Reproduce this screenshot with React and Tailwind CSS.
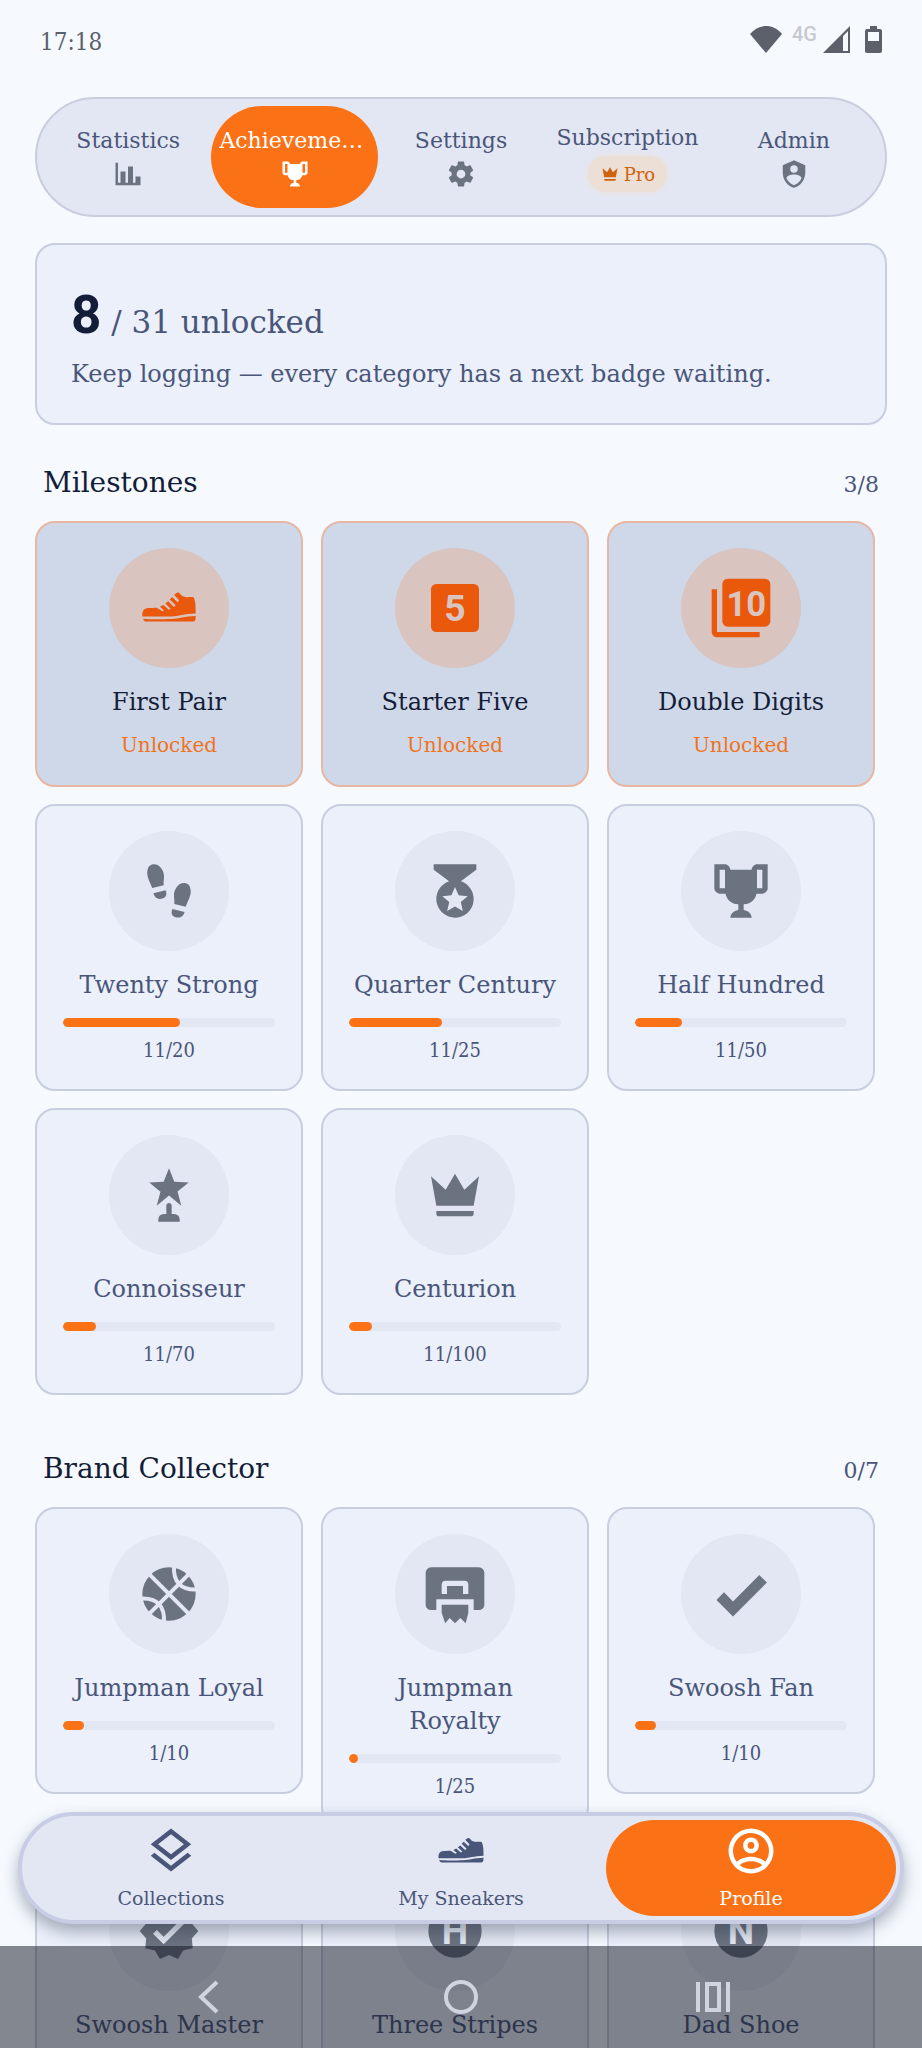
import clsx from 'clsx';

const paths = {
  chart: 'M22,21H2V3H4V19H6V10H10V19H12V6H16V19H18V14H22V21Z',
  trophy:
    'M20.2,2H19.5H18C17.1,2 16,3 16,4H8C8,3 6.9,2 6,2H4.5H3.8H2V11C2,12 3,13 4,13H6.2C6.6,15 7.9,16.7 11,17V19.08C8,19.54 8,22 8,22H16C16,22 16,19.54 13,19.08V17C16.1,16.7 17.4,15 17.8,13H20C21,13 22,12 22,11V2H20.2M4,11V4H6V6V11C5.1,11 4.3,11 4,11M20,11C19.7,11 18.9,11 18,11V6V4H20V11Z',
  cog: 'M12,15.5A3.5,3.5 0 0,1 8.5,12A3.5,3.5 0 0,1 12,8.5A3.5,3.5 0 0,1 15.5,12A3.5,3.5 0 0,1 12,15.5M19.43,12.97C19.47,12.65 19.5,12.33 19.5,12C19.5,11.67 19.47,11.34 19.43,11L21.54,9.37C21.73,9.22 21.78,8.95 21.66,8.73L19.66,5.27C19.54,5.05 19.27,4.96 19.05,5.05L16.56,6.05C16.04,5.66 15.5,5.32 14.87,5.07L14.5,2.42C14.46,2.18 14.25,2 14,2H10C9.75,2 9.54,2.18 9.5,2.42L9.13,5.07C8.5,5.32 7.96,5.66 7.44,6.05L4.95,5.05C4.73,4.96 4.46,5.05 4.34,5.27L2.34,8.73C2.21,8.95 2.27,9.22 2.46,9.37L4.57,11C4.53,11.34 4.5,11.67 4.5,12C4.5,12.33 4.53,12.65 4.57,12.97L2.46,14.63C2.27,14.78 2.21,15.05 2.34,15.27L4.34,18.73C4.46,18.95 4.73,19.03 4.95,18.95L7.44,17.94C7.96,18.34 8.5,18.68 9.13,18.93L9.5,21.58C9.54,21.82 9.75,22 10,22H14C14.25,22 14.46,21.82 14.5,21.58L14.87,18.93C15.5,18.67 16.04,18.34 16.56,17.94L19.05,18.95C19.27,19.03 19.54,18.95 19.66,18.73L21.66,15.27C21.78,15.05 21.73,14.78 21.54,14.63L19.43,12.97Z',
  shield:
    'M12,1L3,5V11C3,16.55 6.84,21.74 12,23C17.16,21.74 21,16.55 21,11V5L12,1M12,5A3,3 0 0,1 15,8A3,3 0 0,1 12,11A3,3 0 0,1 9,8A3,3 0 0,1 12,5M17.13,17C15.92,18.85 14.11,20.24 12,20.92C9.89,20.24 8.08,18.85 6.87,17C6.53,16.5 6.24,16 6,15.47C6,13.82 8.71,12.47 12,12.47C15.29,12.47 18,13.79 18,15.47C17.76,16 17.47,16.5 17.13,17Z',
  crown: 'M5 16L3 5L8.5 10L12 4L15.5 10L21 5L19 16H5M19 19C19 19.6 18.6 20 18 20H6C5.4 20 5 19.6 5 19V18H19V19Z',
  medal:
    'M20,2H4V4L9.81,8.36C6.14,9.57 4.14,13.53 5.35,17.2C6.56,20.87 10.5,22.87 14.19,21.66C17.86,20.45 19.86,16.5 18.65,12.82C17.95,10.71 16.3,9.05 14.19,8.36L20,4V2M14.94,19.5L12,17.78L9.06,19.5L9.84,16.17L7.25,13.93L10.66,13.64L12,10.5L13.34,13.64L16.75,13.93L14.16,16.17L14.94,19.5Z',
  award:
    'M15.2,10.7L16.6,16L12,12.2L7.4,16L8.8,10.8L4.6,7.3L10,7L12,2L14,7L19.4,7.3L15.2,10.7M14,19.1H13V16C13,14.7 11,14.7 11,16V19.1H10A2,2 0 0,0 8,21.1V22H16V21.1A2,2 0 0,0 14,19.1Z',
  check: 'M9,20.42L2.79,14.21L5.62,11.38L9,14.77L18.88,4.88L21.71,7.71L9,20.42Z',
  decagram:
    'M23,12L20.56,9.22L20.9,5.54L17.29,4.72L15.4,1.54L12,3L8.6,1.54L6.71,4.72L3.1,5.53L3.44,9.21L1,12L3.44,14.78L3.1,18.47L6.71,19.29L8.6,22.47L12,21L15.4,22.46L17.29,19.28L20.9,18.46L20.56,14.78L23,12M10,17L6,13L7.41,11.59L10,14.17L16.59,7.58L18,9L10,17Z',
  layers:
    'M12,18.54L19.37,12.8L21,14.07L12,21.07L3,14.07L4.62,12.81L12,18.54M12,16L3,9L12,2L21,9L12,16M12,4.53L6.26,9L12,13.47L17.74,9L12,4.53Z',
  account:
    'M12,2A10,10 0 0,0 2,12A10,10 0 0,0 12,22A10,10 0 0,0 22,12A10,10 0 0,0 12,2M7.07,18.28C7.5,17.38 10.12,16.5 12,16.5C13.88,16.5 16.5,17.38 16.93,18.28C15.57,19.36 13.86,20 12,20C10.14,20 8.43,19.36 7.07,18.28M18.36,16.83C16.93,15.09 13.46,14.5 12,14.5C10.54,14.5 7.07,15.09 5.64,16.83C4.62,15.5 4,13.82 4,12C4,7.59 7.59,4 12,4C16.41,4 20,7.59 20,12C20,13.82 19.38,15.5 18.36,16.83M12,6C10.06,6 8.5,7.56 8.5,9.5C8.5,11.44 10.06,13 12,13C13.94,13 15.5,11.44 15.5,9.5C15.5,7.56 13.94,6 12,6M12,11A1.5,1.5 0 0,1 10.5,9.5A1.5,1.5 0 0,1 12,8A1.5,1.5 0 0,1 13.5,9.5A1.5,1.5 0 0,1 12,11Z',
  hoop: 'M3,2H21A2,2 0 0,1 23,4V16A2,2 0 0,1 21,18H19V14H5V18H3A2,2 0 0,1 1,16V4A2,2 0 0,1 3,2M7,12H9V9H15V12H17V8.5A1.5,1.5 0 0,0 15.5,7H8.5A1.5,1.5 0 0,0 7,8.5V12M7,16H17V19L16,23L14,21L12,23L10,21L8.3,23L7,19V16Z',
  sneaker:
    'M2,14.9C1.9,13.2 2.6,12.1 4.2,12C5.8,12 6.4,11.9 7.4,11.9L9.5,13.2L10.2,12.9L8.6,11.5L9.9,10.9L11.9,12.7L12.6,12.3L10.6,10.3L11.7,9.5L13.8,11.6L14.5,11L12.3,8.8L13.2,7.9L15.2,9.8L15.8,9.1L13.9,7L15.1,6.2C16.2,6.1 16.1,7.2 17.4,7.7C18.6,8.2 19.8,7.7 21.2,8C22,9.4 22,11.6 22,14.1C17.6,14.2 15.8,15.2 12.8,15.2H2M2.3,16C5,16.3 9.8,16.2 12.8,16.1C16,16 17.6,15.1 22,15V15.8C21.9,16.6 21.6,17.1 21,17.1H3.6C2.9,17.1 2.4,16.6 2.3,16Z',
};

function Icon({ name, className }) {
  return (
    <svg viewBox="0 0 24 24" className={className} fill="currentColor" fillRule="evenodd" aria-hidden="true">
      <path d={paths[name]} />
    </svg>
  );
}

function FootprintsIcon({ className }) {
  const foot =
    'M10.74,11.72C11.21,12.95 11.16,14.23 9.75,14.74C6.85,15.81 6.2,13 6.16,12.86L10.74,11.72M5.71,10.91L10.03,9.84C9.84,8.79 10.13,7.74 10.13,6.5C10.13,4.82 8.8,1.53 5.68,2.06C4.26,2.3 3.84,4 3.85,5.4C3.85,7.2 5.57,10.07 5.71,10.91Z';
  return (
    <svg viewBox="0 0 24 24" className={className} fill="currentColor" aria-hidden="true">
      <path d={foot} />
      <path d={foot} transform="matrix(-1 0 0 1 24 7)" />
    </svg>
  );
}

function BasketballIcon({ className }) {
  return (
    <svg viewBox="0 0 24 24" className={className} aria-hidden="true">
      <circle cx="12" cy="12" r="10" fill="currentColor" />
      <path
        d="M4 4L20 20M20 4L4 20M13.9 1C13.4 7.6 16.4 10.8 23 10.3M1 13.7C7.6 13.2 10.6 16.4 10.1 23"
        fill="none"
        stroke="#e3e7f3"
        strokeWidth="1.5"
      />
    </svg>
  );
}

function FiveIcon({ className }) {
  return (
    <svg viewBox="0 0 24 24" className={className} aria-hidden="true">
      <rect x="3" y="3" width="18" height="18" rx="2" fill="currentColor" />
      <text x="12" y="17" textAnchor="middle" fontSize="14" fill="#d9c4c0" className="font-['Roboto',sans-serif] font-bold">5</text>
    </svg>
  );
}

function TenIcon({ className }) {
  return (
    <svg viewBox="0 0 24 24" className={className} aria-hidden="true">
      <rect x="5" y="1" width="18" height="18" rx="2" fill="currentColor" />
      <path d="M2 5V21a1 1 0 0 0 1 1H19" fill="none" stroke="currentColor" strokeWidth="2" />
      <text x="14" y="15" textAnchor="middle" fontSize="13" fill="#d9c4c0" className="font-['Roboto',sans-serif] font-bold">10</text>
    </svg>
  );
}

function LetterIcon({ letter, className }) {
  return (
    <svg viewBox="0 0 24 24" className={className} aria-hidden="true">
      <circle cx="12" cy="12" r="10" fill="currentColor" />
      <text x="12" y="17" textAnchor="middle" fontSize="14" fill="#e3e7f3" className="font-['Roboto',sans-serif] font-bold">{letter}</text>
    </svg>
  );
}

function BadgeIcon({ icon }) {
  const className = 'size-16';
  if (icon === 'five') return <FiveIcon className={className} />;
  if (icon === 'ten') return <TenIcon className={className} />;
  if (icon === 'footprints') return <FootprintsIcon className={className} />;
  if (icon === 'basketball') return <BasketballIcon className={className} />;
  if (icon === 'H' || icon === 'N') return <LetterIcon letter={icon} className={className} />;
  return <Icon name={icon} className={className} />;
}

const tabs = [
  { label: 'Statistics', icon: 'chart' },
  { label: 'Achievements', icon: 'trophy', active: true },
  { label: 'Settings', icon: 'cog' },
  { label: 'Subscription', pro: true },
  { label: 'Admin', icon: 'shield' },
];

const sections = [
  {
    title: 'Milestones',
    count: '3/8',
    badges: [
      { name: 'First Pair', icon: 'sneaker', unlocked: true },
      { name: 'Starter Five', icon: 'five', unlocked: true },
      { name: 'Double Digits', icon: 'ten', unlocked: true },
      { name: 'Twenty Strong', icon: 'footprints', value: 11, goal: 20 },
      { name: 'Quarter Century', icon: 'medal', value: 11, goal: 25 },
      { name: 'Half Hundred', icon: 'trophy', value: 11, goal: 50 },
      { name: 'Connoisseur', icon: 'award', value: 11, goal: 70 },
      { name: 'Centurion', icon: 'crown', value: 11, goal: 100 },
    ],
  },
  {
    title: 'Brand Collector',
    count: '0/7',
    badges: [
      { name: 'Jumpman Loyal', icon: 'basketball', value: 1, goal: 10 },
      { name: 'Jumpman Royalty', icon: 'hoop', value: 1, goal: 25 },
      { name: 'Swoosh Fan', icon: 'check', value: 1, goal: 10 },
      { name: 'Swoosh Master', icon: 'decagram', value: 1, goal: 25 },
      { name: 'Three Stripes', icon: 'H', value: 1, goal: 10 },
      { name: 'Dad Shoe', icon: 'N', value: 1, goal: 10 },
    ],
  },
];

const navItems = [
  { label: 'Collections', icon: 'layers' },
  { label: 'My Sneakers', icon: 'sneaker' },
  { label: 'Profile', icon: 'account', active: true },
];

function StatusBar() {
  return (
    <div className="flex h-[97px] shrink-0 items-start justify-between px-10 pt-6 text-[#5b606b]">
      <span className="font-['DejaVu_Serif_Condensed','DejaVu_Serif',serif] text-[24px] leading-9">17:18</span>
      <div className="flex items-start pt-0.5">
        <svg viewBox="0 0 32 27" className="h-[27px] w-8" fill="currentColor" aria-hidden="true">
          <path d="M0 8C9-2.600 23-2.600 32 8L16 27Z" />
        </svg>
        <span className="ml-2.5 font-['Roboto',sans-serif] text-[20px] font-medium leading-4 text-[#c6c9d0]">4G</span>
        <svg viewBox="0 0 27 27" className="ml-1.5 size-[27px]" fill="currentColor" fillRule="evenodd" aria-hidden="true">
          <path d="M27 0V27H0ZM20 10V25H25V5Z" />
        </svg>
        <svg viewBox="0 0 17 27" className="ml-[15px] h-[27px] w-[17px]" fill="currentColor" fillRule="evenodd" aria-hidden="true">
          <path d="M5 0H12V3H15a2 2 0 0 1 2 2V25a2 2 0 0 1-2 2H2a2 2 0 0 1-2-2V5a2 2 0 0 1 2-2H5ZM3 6V15H14V6Z" />
        </svg>
      </div>
    </div>
  );
}

function TabBar() {
  return (
    <nav className="flex rounded-full border-2 border-[#c9cddd] bg-[#e3e7f3] px-2 py-[7px]">
      {tabs.map((tab) => (
        <button
          key={tab.label}
          type="button"
          className={clsx(
            'flex h-[102px] min-w-0 flex-1 flex-col items-center justify-center rounded-full px-2',
            tab.active ? 'bg-[#fb7116] text-white' : 'text-[#4a5679]'
          )}
        >
          <span className="w-full truncate text-center text-[22px] leading-8">{tab.label}</span>
          {tab.pro ? (
            <span className="mt-0.5 flex h-9 items-center gap-1 rounded-full bg-[#ecdfd6] px-3 text-[18px] text-[#cf6310] shadow-[0_0_6px_#ecdfd6]">
              <Icon name="crown" className="size-5" />
              Pro
            </span>
          ) : (
            <Icon name={tab.icon} className={clsx('mt-0.5 size-[30px]', !tab.active && 'text-[#6b7280]')} />
          )}
        </button>
      ))}
    </nav>
  );
}

function BadgeCard({ badge }) {
  return (
    <article
      className={clsx(
        'flex flex-col items-center rounded-[20px] border-2 px-[26px] py-[25px]',
        badge.unlocked ? 'border-[#e8b7a3] bg-[#cfd8e8]' : 'border-[#c9cde0] bg-[#ebf0fb]'
      )}
    >
      <div
        className={clsx(
          'flex size-[120px] items-center justify-center rounded-full',
          badge.unlocked ? 'bg-[#d9c4c0] text-[#ea580c]' : 'bg-[#e3e7f3] text-[#6b7280]'
        )}
      >
        <BadgeIcon icon={badge.icon} />
      </div>
      <h3
        className={clsx(
          'mt-[18px] px-1 text-center text-[24px] leading-[33px]',
          badge.unlocked ? 'text-[#141d38]' : 'text-[#4a5679]'
        )}
      >
        {badge.name}
      </h3>
      {badge.unlocked ? (
        <p className="mt-3 text-[20px] leading-[29px] text-[#f0731d]">Unlocked</p>
      ) : (
        <>
          <div className="mt-4 h-[9px] w-full overflow-hidden rounded-full bg-[#e3e7f3]">
            <div
              className="h-full min-w-[9px] rounded-full bg-[#fb7116]"
              style={{ width: `${(badge.value / badge.goal) * 100}%` }}
            />
          </div>
          <p className="mt-2.5 font-['DejaVu_Serif_Condensed','DejaVu_Serif',serif] text-[20px] leading-[27px] text-[#4a5679]">
            {badge.value}/{badge.goal}
          </p>
        </>
      )}
    </article>
  );
}

function BadgeSection({ section }) {
  return (
    <section className="mb-[52px]">
      <div className="flex items-baseline justify-between px-2">
        <h2 className="text-[28px] leading-[44px] text-[#141d38]">{section.title}</h2>
        <span className="text-[22px] text-[#4a5679]">{section.count}</span>
      </div>
      <div className="mr-3 mt-4 grid grid-cols-3 items-start gap-x-[18px] gap-y-[17px]">
        {section.badges.map((badge) => (
          <BadgeCard key={badge.name} badge={badge} />
        ))}
      </div>
    </section>
  );
}

function BottomNav() {
  return (
    <nav className="absolute inset-x-[18px] bottom-[124px] flex rounded-full border-4 border-[#c8cde5] bg-[#e3e7f3] p-1 shadow-[0_8px_16px_rgba(30,41,59,0.35)]">
      {navItems.map((item) => (
        <button
          key={item.label}
          type="button"
          className={clsx(
            'flex h-24 flex-1 flex-col items-center rounded-full pt-1',
            item.active ? 'bg-[#fb7116] text-white' : 'text-[#4a5679]'
          )}
        >
          <Icon name={item.icon} className="size-[54px]" />
          <span className="mt-0.5 text-[19px] leading-9">{item.label}</span>
        </button>
      ))}
    </nav>
  );
}

function SystemBar() {
  return (
    <div className="absolute inset-x-0 bottom-0 flex h-[102px] items-center justify-center gap-[218px] bg-[#0f1420]/50 text-[#d0d4de]">
      <svg viewBox="0 0 34 34" className="size-[34px]" fill="none" stroke="currentColor" strokeWidth="4" aria-hidden="true">
        <path d="M25 2L9 17L25 32" />
      </svg>
      <svg viewBox="0 0 34 34" className="size-[34px]" fill="none" stroke="currentColor" strokeWidth="4" aria-hidden="true">
        <circle cx="17" cy="17" r="15" />
      </svg>
      <svg viewBox="0 0 34 34" className="size-[34px]" fill="none" stroke="currentColor" strokeWidth="4" aria-hidden="true">
        <path d="M2 2V32M32 2V32M11 4H23V30H11Z" />
      </svg>
    </div>
  );
}

export default function App() {
  return (
    <div className="relative flex h-screen flex-col overflow-hidden bg-[#f6faff] font-['DejaVu_Serif',serif]">
      <StatusBar />
      <main className="min-h-0 flex-1 overflow-hidden px-[35px]">
        <TabBar />
        <div className="mb-9 mt-[26px] rounded-[20px] border-2 border-[#c9cde0] bg-[#ebf0fb] px-[34px] pb-7 pt-[39px]">
          <p className="text-[31px] leading-[62px] text-[#4a5679]">
            <strong className="font-['Roboto',sans-serif] text-[53px] font-bold text-[#141d38]">8</strong> / 31 unlocked
          </p>
          <p className="text-[24px] leading-[42px] text-[#4a5679]">Keep logging — every category has a next badge waiting.</p>
        </div>
        {sections.map((section) => (
          <BadgeSection key={section.title} section={section} />
        ))}
      </main>
      <BottomNav />
      <SystemBar />
    </div>
  );
}
